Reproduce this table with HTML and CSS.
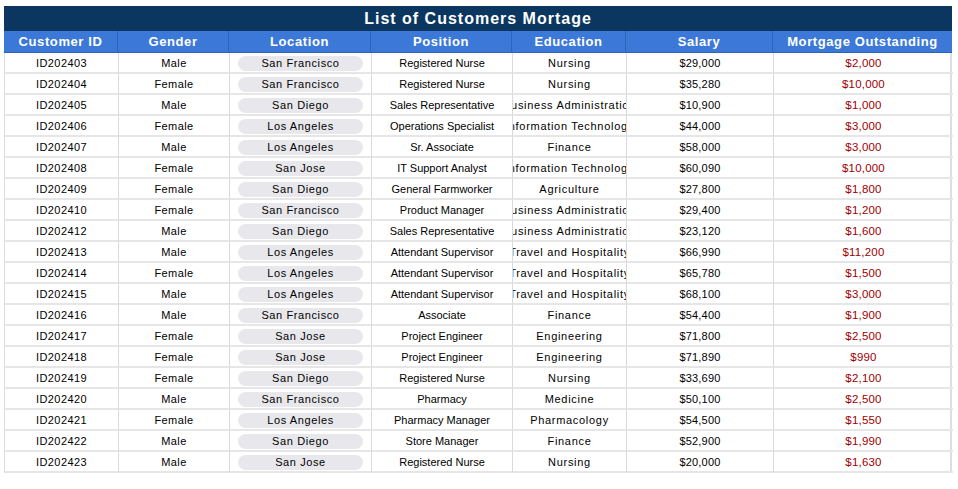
FILE: index.html
```html
<!DOCTYPE html>
<html>
<head>
<meta charset="utf-8">
<link rel="stylesheet" href="styles.css">
</head>
<body>
<div class="sheet">
  <div class="title">List of Customers Mortage</div>
  <div class="grid">
    <div class="hd">Customer ID</div>
    <div class="hd">Gender</div>
    <div class="hd">Location</div>
    <div class="hd">Position</div>
    <div class="hd">Education</div>
    <div class="hd">Salary</div>
    <div class="hd last">Mortgage Outstanding</div>
  </div>
  <div class="grid body" id="rows"></div>
</div>
<script src="app.js"></script>
</body>
</html>
```

FILE: app.js
```js
const data = [
["ID202403","Male","San Francisco","Registered Nurse","Nursing","$29,000","$2,000"],
["ID202404","Female","San Francisco","Registered Nurse","Nursing","$35,280","$10,000"],
["ID202405","Male","San Diego","Sales Representative","Business Administration","$10,900","$1,000"],
["ID202406","Female","Los Angeles","Operations Specialist","Information Technology","$44,000","$3,000"],
["ID202407","Male","Los Angeles","Sr. Associate","Finance","$58,000","$3,000"],
["ID202408","Female","San Jose","IT Support Analyst","Information Technology","$60,090","$10,000"],
["ID202409","Female","San Diego","General Farmworker","Agriculture","$27,800","$1,800"],
["ID202410","Female","San Francisco","Product Manager","Business Administration","$29,400","$1,200"],
["ID202412","Male","San Diego","Sales Representative","Business Administration","$23,120","$1,600"],
["ID202413","Male","Los Angeles","Attendant Supervisor","Travel and Hospitality","$66,990","$11,200"],
["ID202414","Female","Los Angeles","Attendant Supervisor","Travel and Hospitality","$65,780","$1,500"],
["ID202415","Male","Los Angeles","Attendant Supervisor","Travel and Hospitality","$68,100","$3,000"],
["ID202416","Male","San Francisco","Associate","Finance","$54,400","$1,900"],
["ID202417","Female","San Jose","Project Engineer","Engineering","$71,800","$2,500"],
["ID202418","Female","San Jose","Project Engineer","Engineering","$71,890","$990"],
["ID202419","Female","San Diego","Registered Nurse","Nursing","$33,690","$2,100"],
["ID202420","Male","San Francisco","Pharmacy","Medicine","$50,100","$2,500"],
["ID202421","Female","Los Angeles","Pharmacy Manager","Pharmacology","$54,500","$1,550"],
["ID202422","Male","San Diego","Store Manager","Finance","$52,900","$1,990"],
["ID202423","Male","San Jose","Registered Nurse","Nursing","$20,000","$1,630"]
];
const rows = document.getElementById('rows');
let html = '';
for (const r of data) {
  html += `<div class="c id">${r[0]}</div>`;
  html += `<div class="c gen">${r[1]}</div>`;
  html += `<div class="c loc"><span class="pill">${r[2]}</span></div>`;
  html += `<div class="c pos">${r[3]}</div>`;
  html += `<div class="c edu"><span>${r[4]}</span></div>`;
  html += `<div class="c sal">${r[5]}</div>`;
  html += `<div class="c mort">${r[6]}</div>`;
}
rows.innerHTML = html;
```

FILE: styles.css
```css
* { box-sizing: border-box; }
body {
  margin: 0;
  background: #fff;
  font-family: "Liberation Sans", Arial, sans-serif;
}
.sheet {
  margin: 6px 0 0 4px;
  width: 948px;
}
.title {
  height: 25px;
  background: #0a365f;
  color: #fff;
  font-weight: bold;
  font-size: 16px;
  letter-spacing: 1px;
  text-align: center;
  line-height: 26px;
}
.grid {
  display: grid;
  grid-template-columns: 114px 111px 142px 141px 114px 147px 179px;
}
.hd {
  height: 22px;
  background: #3c78d8;
  color: #fff;
  font-weight: bold;
  font-size: 13px;
  letter-spacing: 0.6px;
  display: flex;
  align-items: center;
  justify-content: center;
  border-right: 1px solid #2f64bd;
  border-bottom: 1px solid #2f62b5;
  padding-bottom: 1px;
}
.hd.last { border-right: none; }
.body {
  border-left: 1px solid #dedede;
  border-right: 2px solid #dedede;
}
.c {
  height: 21px;
  border-bottom: 2px solid #e6e6e6;
  border-right: 1px solid #d9d9d9;
  display: flex;
  align-items: center;
  justify-content: center;
  font-size: 11px;
  color: #000;
  white-space: nowrap;
  overflow: hidden;
  padding-top: 1px;
}
.mort { border-right: none; color: #a00000; font-size: 11.5px; letter-spacing: 0.2px; }
.id, .gen { letter-spacing: 0.4px; }
.pos { font-size: 11px; letter-spacing: 0; }
.edu { letter-spacing: 0.7px; }
.sal { font-size: 11px; letter-spacing: 0.2px; }
.pill {
  display: flex;
  align-items: center;
  justify-content: center;
  width: 125px;
  height: 15px;
  border-radius: 8px;
  background: #e8e8ec;
  letter-spacing: 0.6px;
}
```
